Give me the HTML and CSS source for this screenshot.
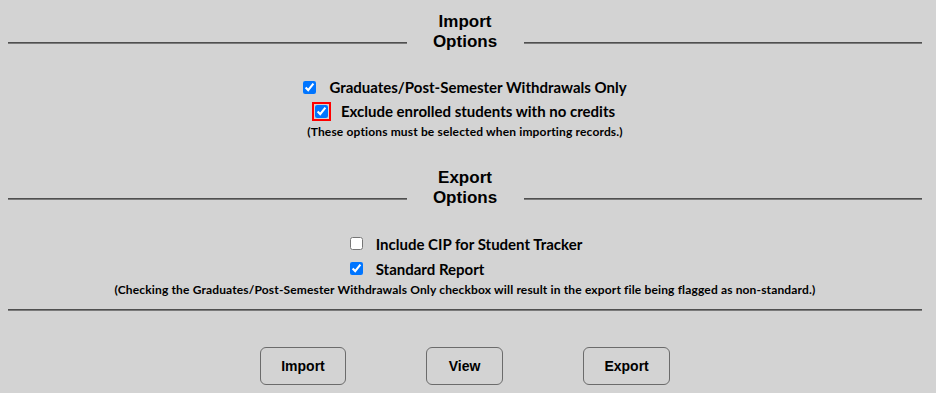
FILE: index.html
```html
<!DOCTYPE html>
<html>
<head>
<meta charset="utf-8">
<link rel="stylesheet" href="styles.css">
</head>
<body>
<div class="page">
  <div class="section-head head-import">
    <div class="rule"></div>
    <div class="title">Import<br>Options</div>
    <div class="rule"></div>
  </div>
  <div class="opts opts-import">
    <label class="opt"><input type="checkbox" checked><span>Graduates/Post-Semester Withdrawals Only</span></label>
    <label class="opt"><input type="checkbox" class="focused" checked><span>Exclude enrolled students with no credits</span></label>
    <div class="note">(These options must be selected when importing records.)</div>
  </div>
  <div class="section-head head-export">
    <div class="rule"></div>
    <div class="title">Export<br>Options</div>
    <div class="rule"></div>
  </div>
  <div class="opts opts-export">
    <div class="left-group">
      <label class="opt opt-wide"><input type="checkbox"><span>Include CIP for Student Tracker</span></label>
      <label class="opt opt-wide"><input type="checkbox" checked><span>Standard Report</span></label>
    </div>
    <div class="note">(Checking the Graduates/Post-Semester Withdrawals Only checkbox will result in the export file being flagged as non-standard.)</div>
  </div>
  <div class="rule full"></div>
  <div class="buttons">
    <button class="btn">Import</button>
    <button class="btn btn-view">View</button>
    <button class="btn">Export</button>
  </div>
</div>
</body>
</html>
```
FILE: styles.css
```css
html, body {
  margin: 0;
  padding: 0;
  background: #d3d3d3;
}
body {
  padding: 8px;
  font-family: "Liberation Sans", Arial, sans-serif;
  color: #000;
}
.page {
  width: 914px;
}
.section-head {
  display: flex;
  align-items: flex-end;
}
.head-import {
  margin-top: 4px;
}
.head-export {
  margin-top: 27px;
}
.section-head .title {
  width: 117px;
  text-align: center;
  font-weight: bold;
  font-size: 17px;
  line-height: 20px;
}
.rule {
  flex: 1;
  height: 0;
  border-top: 1px solid #4f4f4f;
  border-bottom: 1px solid #7a7a7a;
  margin-bottom: 8px;
}
.rule.full {
  margin: 10px 0 0 0;
}
.opts {
  display: flex;
  flex-direction: column;
  align-items: center;
  font-family: "Lato", "Open Sans", sans-serif;
  font-weight: 700;
}
.opts-import {
  margin-top: 23px;
}
.opts-export {
  margin-top: 23px;
}
.opt {
  display: flex;
  align-items: center;
  height: 24px;
  font-size: 15px;
}
.opt input {
  width: 13px;
  height: 13px;
  margin: 0 13px 0 0;
}
.opt input.focused {
  outline: 2px solid #ff0000;
  outline-offset: 1px;
}
.left-group {
  display: flex;
  flex-direction: column;
  align-items: flex-start;
  padding-left: 2px;
}
.opt-wide {
  height: 25px;
}
.note {
  font-size: 12px;
  letter-spacing: 0.15px;
  line-height: 18px;
}
.buttons {
  display: flex;
  justify-content: center;
  gap: 80px;
  margin-top: 36px;
}
.btn {
  height: 38px;
  padding: 0 20px;
  border: 1px solid #6b6b6b;
  border-radius: 6px;
  background: transparent;
  font-family: "Liberation Sans", Arial, sans-serif;
  font-weight: bold;
  font-size: 14px;
  color: #000;
}
.btn-view {
  padding: 0 22px;
}
```
